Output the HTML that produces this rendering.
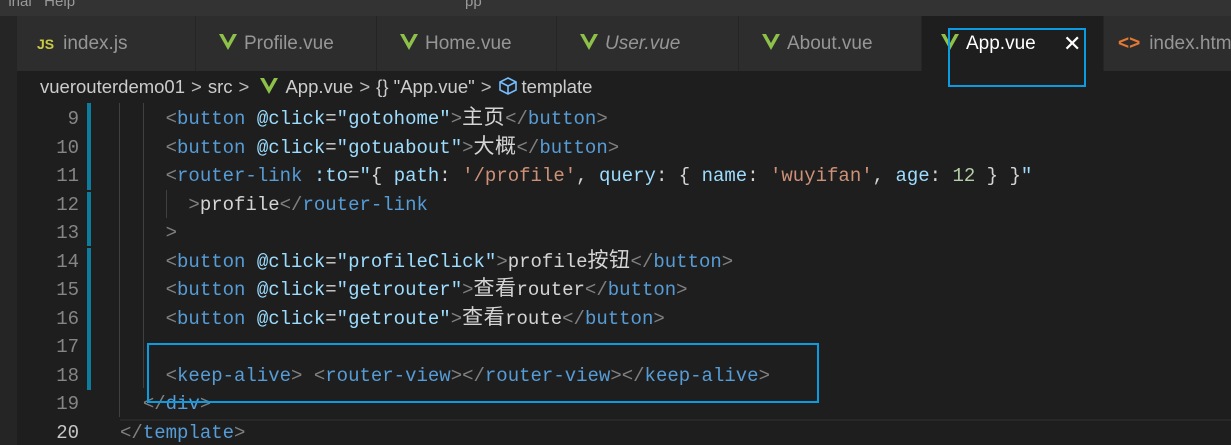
<!DOCTYPE html>
<html><head><meta charset="utf-8"><style>
*{margin:0;padding:0;box-sizing:border-box}
html,body{width:1231px;height:445px;overflow:hidden}
body{background:#1e1e1e;position:relative;font-family:"Liberation Sans","Noto Sans CJK SC",sans-serif}
.title{position:absolute;left:0;top:0;width:1231px;height:16px;background:#333333;color:#9a9a9a;font-size:15px;line-height:4px;overflow:hidden}
.tabbar{position:absolute;left:0;top:16px;width:1231px;height:55px;background:#252526}
.tab{position:absolute;top:0;height:55px;background:#2d2d2d;border-right:1px solid #252526;color:#969696;font-size:19px;line-height:55px;white-space:nowrap;overflow:hidden}
.tab.act{background:#1e1e1e;color:#fff}
.v{display:inline-block;width:18px;height:16px;vertical-align:-1px;margin-right:7px}
.crumb{position:absolute;left:17px;top:71px;width:1214px;height:32px;background:#1e1e1e;color:#cccccc;font-size:18.5px;line-height:32px;padding-left:23px;white-space:nowrap}
.crumb .s{color:#bbb;margin:0 6px}
.left{position:absolute;left:0;top:71px;width:17px;height:374px;background:#252526}
.ln{position:absolute;left:17px;width:62px;text-align:right;color:#858585;font:19px "Liberation Mono",monospace}
.ln div,.code div{height:28.55px;line-height:28.55px;overflow:visible;white-space:pre}
.code{position:absolute;left:120px;font:19px "Liberation Mono","Noto Sans CJK SC",monospace;color:#d4d4d4}
.g{color:#808080}.t{color:#569cd6}.a{color:#9cdcfe}.s1{color:#ce9178}.n{color:#b5cea8}
.cj{font-family:"Noto Sans CJK SC",sans-serif;font-size:21px;line-height:10px;letter-spacing:0.5px}
.guide{position:absolute;width:1px;background:#404040}
.bar{position:absolute;left:87px;width:4px;background:#0c7d9d}
.box{position:absolute;border:2px solid #0a9be0}
</style></head><body>
<div class="title">&nbsp;&nbsp;inal&nbsp;&nbsp;&nbsp;Help<span style="position:absolute;left:465px">pp</span></div>
<div class="tabbar">
 <div class="tab" style="left:17px;width:179px;padding-left:20px"><span style="color:#cbcb41;font-weight:bold;font-size:14px;margin-right:9px">JS</span>index.js</div>
 <div class="tab" style="left:196px;width:181px;padding-left:23px"><svg class="v" viewBox="0 0 18 16"><path d="M0 0h4l5 9 5-9h4L9 16z" fill="#8dc149"/></svg>Profile.vue</div>
 <div class="tab" style="left:377px;width:180px;padding-left:23px"><svg class="v" viewBox="0 0 18 16"><path d="M0 0h4l5 9 5-9h4L9 16z" fill="#8dc149"/></svg>Home.vue</div>
 <div class="tab" style="left:557px;width:182px;padding-left:23px;font-style:italic"><svg class="v" viewBox="0 0 18 16"><path d="M0 0h4l5 9 5-9h4L9 16z" fill="#8dc149"/></svg>User.vue</div>
 <div class="tab" style="left:739px;width:183px;padding-left:23px"><svg class="v" viewBox="0 0 18 16"><path d="M0 0h4l5 9 5-9h4L9 16z" fill="#8dc149"/></svg>About.vue</div>
 <div class="tab act" style="left:922px;width:182px;padding-left:19px"><svg class="v" viewBox="0 0 18 16"><path d="M0 0h4l5 9 5-9h4L9 16z" fill="#8dc149"/></svg>App.vue<span style="position:absolute;left:141px;font-size:22px">✕</span></div>
 <div class="tab" style="left:1104px;width:140px;padding-left:14px"><span style="color:#e37933;font-weight:bold;margin-right:9px">&lt;&gt;</span>index.html</div>
</div>
<div class="left"></div>
<div class="crumb">vuerouterdemo01<span class="s">&gt;</span>src<span class="s">&gt;</span> <svg class="v" viewBox="0 0 18 16"><path d="M0 0h4l5 9 5-9h4L9 16z" fill="#8dc149"/></svg>App.vue<span class="s">&gt;</span>{} "App.vue"<span class="s">&gt;</span><svg width="20" height="18" viewBox="0 0 20 18" style="vertical-align:-2px;margin-right:4px"><path d="M10 1 18 5v8l-8 4-8-4V5zM2 5l8 4 8-4M10 9v8" fill="none" stroke="#75beff" stroke-width="1.6"/></svg>template</div>

<div style="position:absolute;left:120px;top:419px;width:1111px;height:26px;border-top:2px solid #282828"></div>
<div class="guide" style="left:119px;top:103px;height:314px"></div>
<div class="guide" style="left:143px;top:103px;height:285px"></div>
<div class="guide" style="left:166px;top:190px;height:28px"></div>
<div class="bar" style="top:103px;height:87px"></div>
<div class="bar" style="top:192px;height:54px"></div>
<div class="bar" style="top:248px;height:142px"></div>

<div class="ln" style="top:105px"><div>9</div><div>10</div><div>11</div><div>12</div><div>13</div><div>14</div><div>15</div><div>16</div><div>17</div><div>18</div><div>19</div><div style="color:#c6c6c6">20</div></div>
<div class="code" style="top:105px">
<div>    <span class="g">&lt;</span><span class="t">button</span> <span class="a">@click</span>=<span class="a">"gotohome"</span><span class="g">&gt;</span><span class="cj">主页</span><span class="g">&lt;/</span><span class="t">button</span><span class="g">&gt;</span></div>
<div>    <span class="g">&lt;</span><span class="t">button</span> <span class="a">@click</span>=<span class="a">"gotuabout"</span><span class="g">&gt;</span><span class="cj">大概</span><span class="g">&lt;/</span><span class="t">button</span><span class="g">&gt;</span></div>
<div>    <span class="g">&lt;</span><span class="t">router-link</span> <span class="a">:to</span>=<span class="a">"</span>{ <span class="a">path</span>: <span class="s1">'/profile'</span>, <span class="a">query</span>: { <span class="a">name</span>: <span class="s1">'wuyifan'</span>, <span class="a">age</span>: <span class="n">12</span> } }<span class="a">"</span></div>
<div>      <span class="g">&gt;</span>profile<span class="g">&lt;/</span><span class="t">router-link</span></div>
<div>    <span class="g">&gt;</span></div>
<div>    <span class="g">&lt;</span><span class="t">button</span> <span class="a">@click</span>=<span class="a">"profileClick"</span><span class="g">&gt;</span>profile<span class="cj">按钮</span><span class="g">&lt;/</span><span class="t">button</span><span class="g">&gt;</span></div>
<div>    <span class="g">&lt;</span><span class="t">button</span> <span class="a">@click</span>=<span class="a">"getrouter"</span><span class="g">&gt;</span><span class="cj">查看</span>router<span class="g">&lt;/</span><span class="t">button</span><span class="g">&gt;</span></div>
<div>    <span class="g">&lt;</span><span class="t">button</span> <span class="a">@click</span>=<span class="a">"getroute"</span><span class="g">&gt;</span><span class="cj">查看</span>route<span class="g">&lt;/</span><span class="t">button</span><span class="g">&gt;</span></div>
<div> </div>
<div>    <span class="g">&lt;</span><span class="t">keep-alive</span><span class="g">&gt;</span> <span class="g">&lt;</span><span class="t">router-view</span><span class="g">&gt;&lt;/</span><span class="t">router-view</span><span class="g">&gt;&lt;/</span><span class="t">keep-alive</span><span class="g">&gt;</span></div>
<div>  <span class="g">&lt;/</span><span class="t">div</span><span class="g">&gt;</span></div>
<div><span class="g">&lt;/</span><span class="t">template</span><span class="g">&gt;</span></div>
</div>

<div class="box" style="left:948px;top:28px;width:138px;height:59px"></div>
<div class="box" style="left:147px;top:343px;width:672px;height:60px"></div>
</body></html>
